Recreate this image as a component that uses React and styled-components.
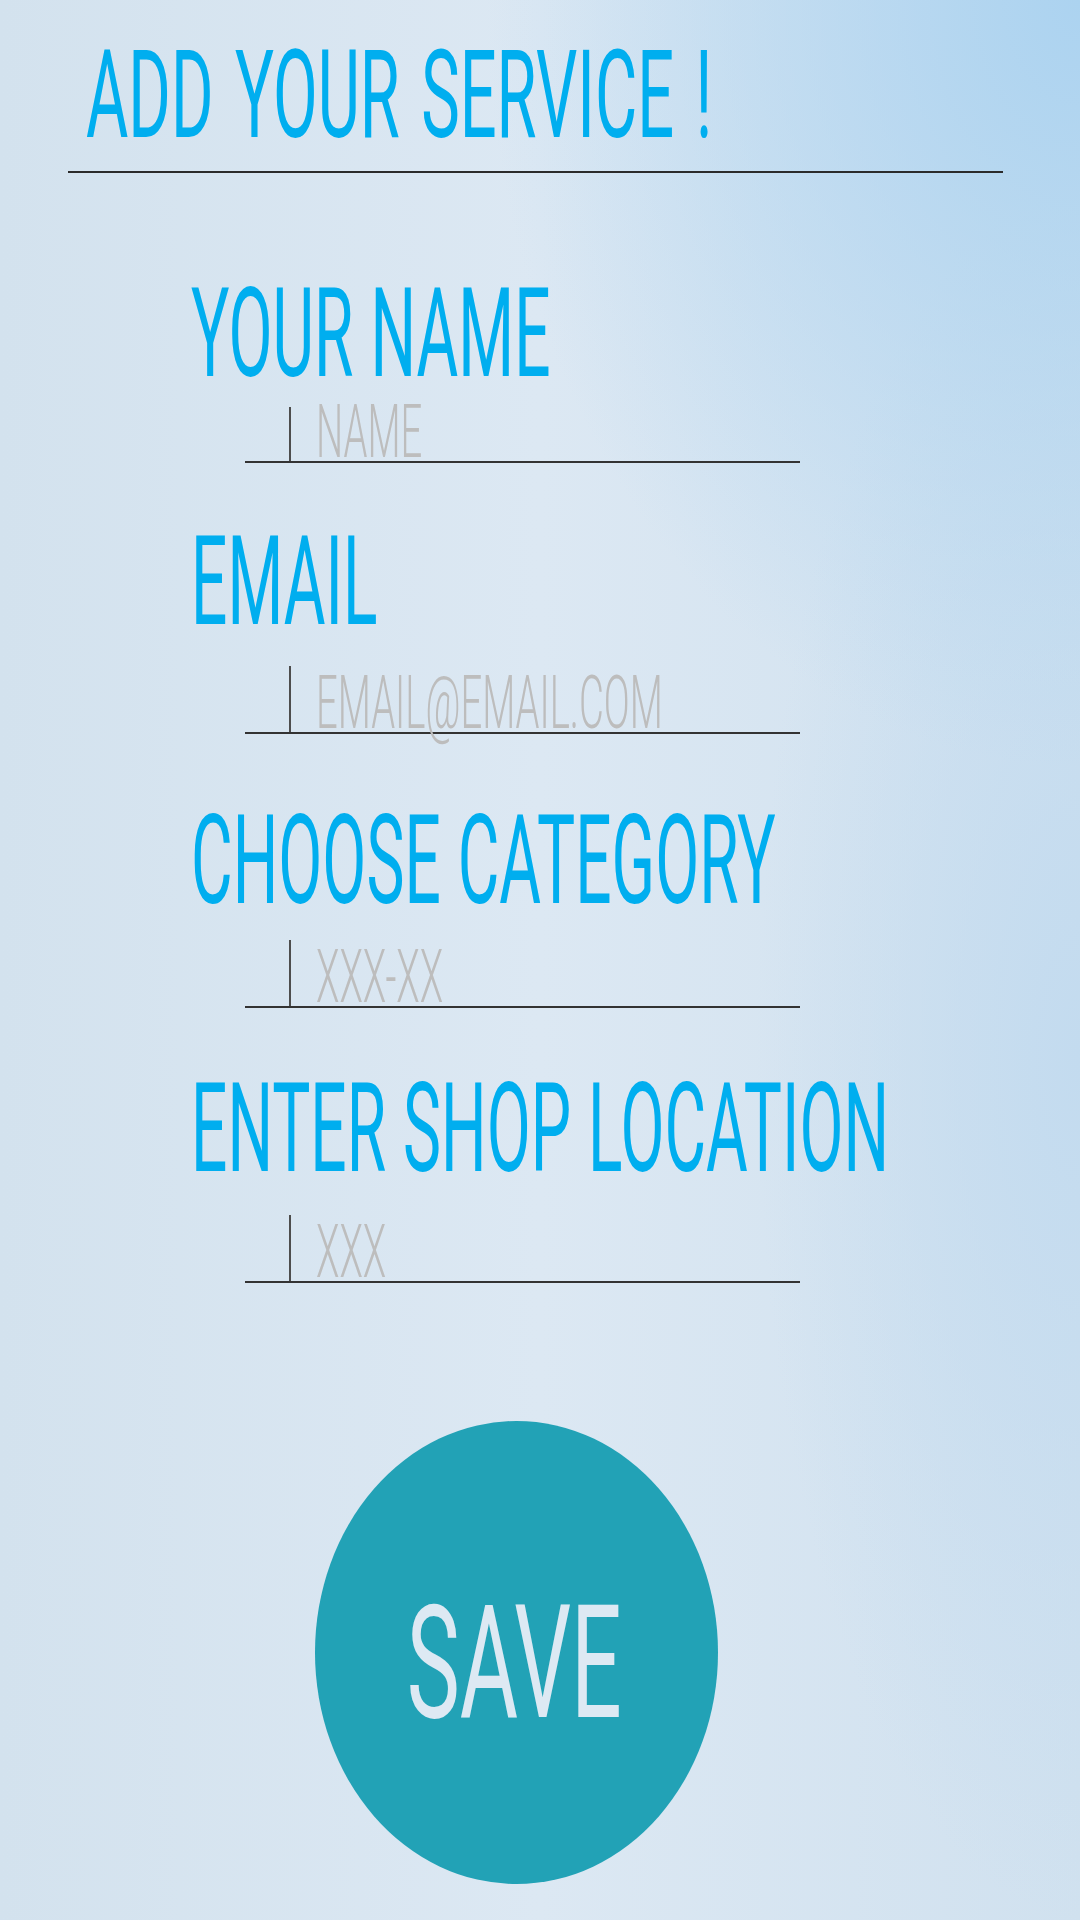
import React from 'react';
import styled, { createGlobalStyle } from 'styled-components';

const GlobalStyle = createGlobalStyle`
  html, body {
    margin: 0;
    padding: 0;
  }

  body {
    font-family: Roboto, "Liberation Sans", sans-serif;
  }

  * {
    box-sizing: border-box;
  }
`;

const Page = styled.main`
  width: 1080px;
  min-height: 1920px;
  overflow: hidden;
  background:
    radial-gradient(ellipse 55% 40% at 100% 0%, #acd3f0 0%, rgba(172, 211, 240, 0) 100%),
    radial-gradient(ellipse 30% 45% at 100% 55%, #c3dbef 0%, rgba(195, 219, 239, 0) 100%),
    linear-gradient(to right, #d3e2ee 0%, #dce8f3 50%, #d0e1ef 100%);
`;

const Header = styled.header`
  padding-top: 35px;
`;

const Title = styled.h1`
  margin: 0 0 0 86px;
  font-size: 122px;
  font-weight: 400;
  line-height: 1;
  color: #00aeef;
  white-space: nowrap;
  transform: scaleX(0.532);
  transform-origin: left center;
  word-spacing: 10px;
`;

const Divider = styled.hr`
  margin: 14px 0 0 68px;
  width: 935px;
  height: 2px;
  border: none;
  background: #2b2b2b;
`;

const Form = styled.form`
  display: flex;
  flex-direction: column;
  padding-left: 191px;
`;

const Field = styled.div`
  margin-top: ${p => p.$top}px;
`;

const Label = styled.h2`
  margin: 0;
  font-size: 125px;
  font-weight: 400;
  line-height: 1;
  color: #00aeef;
  white-space: nowrap;
  transform: scaleX(0.512);
  transform-origin: left center;
  word-spacing: 2px;
`;

const InputRow = styled.div`
  display: flex;
  align-items: flex-end;
  margin: ${p => p.$gap}px 0 0 54px;
  width: 555px;
  height: ${p => p.$h}px;
  border-bottom: 2px solid #333;
`;

const Cursor = styled.span`
  flex-shrink: 0;
  align-self: stretch;
  width: 2px;
  margin-left: 44px;
  background: #4d4d4d;
`;

const Placeholder = styled.span`
  flex-shrink: 0;
  margin: 0 0 0 25px;
  font-size: 75px;
  font-weight: 300;
  line-height: 0.8;
  color: #bdbdbd;
  white-space: nowrap;
  transform: scaleX(0.51);
  transform-origin: left center;
`;

const SaveWrap = styled.div`
  display: flex;
  margin-top: 138px;
  padding-left: 315px;
`;

const SaveButton = styled.button`
  display: flex;
  align-items: center;
  justify-content: center;
  width: 403px;
  height: 463px;
  padding: 0;
  border: none;
  border-radius: 50%;
  background: #22a2b6;
  cursor: pointer;
`;

const SaveText = styled.span`
  margin: 20px 4px 0 0;
  font-family: Roboto, "Liberation Sans", sans-serif;
  font-size: 158px;
  font-weight: 400;
  line-height: 1;
  color: #dde9f3;
  transform: scaleX(0.565);
`;

const fields = [
  { label: 'YOUR NAME', placeholder: 'NAME', top: 98, gap: 11, h: 56 },
  { label: 'EMAIL', placeholder: 'EMAIL@EMAIL.COM', top: 56, gap: 22, h: 68 },
  { label: 'CHOOSE CATEGORY', placeholder: 'XXX-XX', top: 64, gap: 17, h: 68 },
  { label: 'ENTER SHOP LOCATION', placeholder: 'XXX', top: 58, gap: 24, h: 68 },
];

export default function App() {
  return (
    <Page>
      <GlobalStyle />
      <Header>
        <Title>ADD YOUR SERVICE !</Title>
        <Divider />
      </Header>

      <Form onSubmit={e => e.preventDefault()}>
        {fields.map(f => (
          <Field key={f.label} $top={f.top}>
            <Label>{f.label}</Label>
            <InputRow $gap={f.gap} $h={f.h}>
              <Cursor />
              <Placeholder>{f.placeholder}</Placeholder>
            </InputRow>
          </Field>
        ))}
      </Form>

      <SaveWrap>
        <SaveButton type="button">
          <SaveText>SAVE</SaveText>
        </SaveButton>
      </SaveWrap>
    </Page>
  );
}
